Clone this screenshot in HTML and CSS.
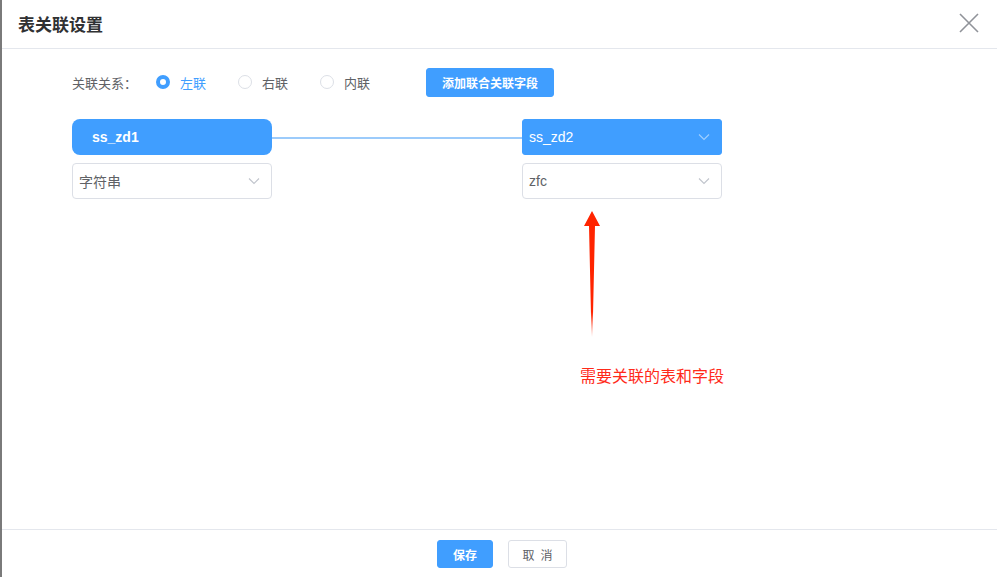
FILE: index.html
```html
<!DOCTYPE html>
<html lang="zh">
<head>
<meta charset="utf-8">
<title>表关联设置</title>
<link rel="stylesheet" href="styles.css">
</head>
<body>
<div class="edge"></div>
<div class="dialog">
  <div class="header">
    <span class="title">表关联设置</span>
    <svg class="close" width="20" height="20" viewBox="0 0 20 20"><path d="M1 1L19 19M19 1L1 19" stroke="#909399" stroke-width="1.6" fill="none"/></svg>
  </div>
  <div class="body">
    <div class="relrow">
      <span class="label">关联关系：</span>
      <label class="radio checked"><span class="dot"></span><span>左联</span></label>
      <label class="radio"><span class="dot"></span><span>右联</span></label>
      <label class="radio"><span class="dot"></span><span>内联</span></label>
      <button class="btn primary addbtn">添加联合关联字段</button>
    </div>
    <div class="tables">
      <div class="col">
        <div class="tablehead">ss_zd1</div>
        <div class="select"><span>字符串</span><svg class="chev" width="12" height="8" viewBox="0 0 12 8"><path d="M1 1.5L6 6.5L11 1.5" stroke="#c0c4cc" stroke-width="1.1" fill="none"/></svg></div>
      </div>
      <div class="link"></div>
      <div class="col">
        <div class="select blue"><span>ss_zd2</span><svg class="chev" width="12" height="8" viewBox="0 0 12 8"><path d="M1 1.5L6 6.5L11 1.5" stroke="#a0cfff" stroke-width="1.1" fill="none"/></svg></div>
        <div class="select"><span>zfc</span><svg class="chev" width="12" height="8" viewBox="0 0 12 8"><path d="M1 1.5L6 6.5L11 1.5" stroke="#c0c4cc" stroke-width="1.1" fill="none"/></svg></div>
        <div class="annot">
          <svg class="arrow" width="20" height="128" viewBox="0 0 20 128">
            <defs>
              <linearGradient id="fade" x1="0" y1="0" x2="0" y2="1">
                <stop offset="0" stop-color="#ff2400"/>
                <stop offset="0.8" stop-color="#ff2400"/>
                <stop offset="1" stop-color="#ff2400" stop-opacity="0"/>
              </linearGradient>
            </defs>
            <path d="M10 0L18 15L13 15L10.5 126L9.5 126L7 15L2 15Z" fill="url(#fade)"/>
          </svg>
          <div class="note">需要关联的表和字段</div>
        </div>
      </div>
    </div>
  </div>
  <div class="footer">
    <button class="btn primary">保存</button>
    <button class="btn plain">取&ensp;消</button>
  </div>
</div>
</body>
</html>
```
FILE: styles.css
```css
* { box-sizing: border-box; }
html, body { margin: 0; padding: 0; height: 100%; }
body {
  display: flex;
  background: #7a7a7a;
  font-family: "Noto Sans CJK SC", "Liberation Sans", sans-serif;
  color: #606266;
  overflow: hidden;
}
.edge { width: 2px; flex: none; }
.dialog {
  flex: 1;
  background: #fff;
  height: 577px;
  display: flex;
  flex-direction: column;
}
.header {
  height: 49px;
  border-bottom: 1px solid #e4e7ed;
  display: flex;
  align-items: center;
  justify-content: space-between;
  padding: 0 18px 0 16px;
}
.title {
  font-size: 17px;
  font-weight: bold;
  color: #303133;
  margin-top: -1px;
}
.close { margin-top: -2px; }
.body {
  flex: 1;
  padding: 19px 0 0 70px;
}
.relrow {
  display: flex;
  align-items: center;
  height: 28px;
  font-size: 13px;
}
.label { color: #606266; width: 84px; }
.radio {
  display: flex;
  align-items: center;
  color: #606266;
  width: 82px;
}
.radio .dot {
  width: 14px;
  height: 14px;
  border-radius: 50%;
  border: 1px solid #dcdfe6;
  margin-right: 10px;
  background: #fff;
}
.radio.checked { color: #409eff; }
.radio.checked .dot {
  border: 4px solid #409eff;
  background: #fff;
}
.btn {
  font-family: "Noto Sans CJK SC", "Liberation Sans", sans-serif;
  font-size: 12px;
  border-radius: 3px;
  cursor: pointer;
  padding: 0;
}
.primary {
  background: #409eff;
  border: 1px solid #409eff;
  color: #fff;
  font-weight: bold;
}
.addbtn {
  margin-left: 24px;
  width: 128px;
  height: 29px;
}
.tables {
  display: flex;
  margin-top: 23px;
}
.col {
  width: 200px;
  display: flex;
  flex-direction: column;
  gap: 8px;
  position: relative;
}
.tablehead {
  height: 36px;
  background: #409eff;
  border-radius: 8px;
  color: #fff;
  font-family: "Liberation Sans", sans-serif;
  font-weight: bold;
  font-size: 14px;
  display: flex;
  align-items: center;
  padding-left: 20px;
}
.link {
  width: 250px;
  height: 2px;
  background: #9ccbfb;
  margin-top: 18px;
}
.select {
  height: 36px;
  border: 1px solid #dcdfe6;
  border-radius: 4px;
  display: flex;
  align-items: center;
  justify-content: space-between;
  padding: 0 11px 0 6px;
  font-size: 14px;
  color: #606266;
  font-family: "Liberation Sans", "Noto Sans CJK SC", sans-serif;
}
.select.blue {
  background: #409eff;
  border-color: #409eff;
  color: #fff;
  border-radius: 3px;
}
.annot {
  position: relative;
  height: 190px;
}
.arrow {
  position: absolute;
  left: 60px;
  top: 4px;
}
.note {
  position: absolute;
  left: 58px;
  top: 156px;
  color: #ff2a1a;
  font-size: 16px;
  white-space: nowrap;
}
.footer {
  height: 48px;
  border-top: 1px solid #e4e7ed;
  display: flex;
  justify-content: center;
  align-items: flex-start;
  padding: 10px 0 0 5px;
  gap: 15px;
}
.footer .btn { height: 28px; }
.footer .primary { width: 56px; }
.plain {
  width: 59px;
  background: #fff;
  border: 1px solid #dcdfe6;
  color: #606266;
}
```
